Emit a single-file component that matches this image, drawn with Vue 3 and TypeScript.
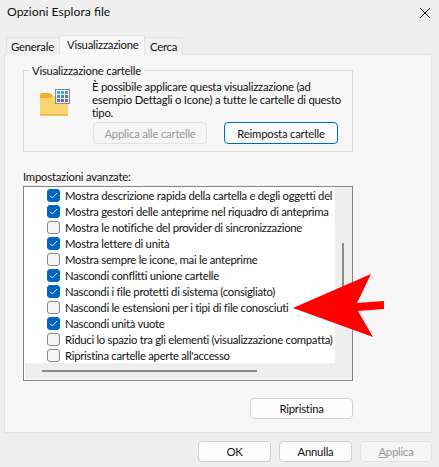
<script setup lang="ts">
const rows: { label: string; on: boolean }[] = [
  { label: 'Mostra descrizione rapida della cartella e degli oggetti del', on: true },
  { label: 'Mostra gestori delle anteprime nel riquadro di anteprima', on: true },
  { label: 'Mostra le notifiche del provider di sincronizzazione', on: false },
  { label: 'Mostra lettere di unità', on: true },
  { label: 'Mostra sempre le icone, mai le anteprime', on: false },
  { label: 'Nascondi conflitti unione cartelle', on: true },
  { label: 'Nascondi i file protetti di sistema (consigliato)', on: true },
  { label: 'Nascondi le estensioni per i tipi di file conosciuti', on: false },
  { label: 'Nascondi unità vuote', on: true },
  { label: 'Riduci lo spazio tra gli elementi (visualizzazione compatta)', on: false },
  { label: "Ripristina cartelle aperte all'accesso", on: false },
]
const cells = ['#3cb4d8', '#3cb4d8', '#4a9fd8', '#4a8ed0', '#4a80c8', '#5a78c4', '#6a70bc', '#7068b8', '#7868b4']
</script>

<template>
  <div class="dialog">
    <header class="titlebar">
      <span class="title">Opzioni Esplora file</span>
      <svg class="close" width="10" height="10" viewBox="0 0 10 10">
        <path d="M0 0L10 10M10 0L0 10" stroke="#1a1a1a" stroke-width="1" fill="none" />
      </svg>
    </header>

    <nav class="tabs">
      <div class="tab tab-first">Generale</div>
      <div class="tab active">Visualizzazione</div>
      <div class="tab">Cerca</div>
    </nav>

    <main class="panel">
      <fieldset class="group">
        <legend class="legend">Visualizzazione cartelle</legend>
        <svg class="folder" width="30" height="27" viewBox="0 0 30 27">
          <path d="M0 6a2 2 0 0 1 2-2h8l3 3v3H0z" fill="#eeb02e" />
          <path d="M0 10.5l1-1.5h10l2-2h15v19a1 1 0 0 1-1 1H1a1 1 0 0 1-1-1z" fill="#fbd56f" />
          <rect x="0" y="25" width="28" height="1.6" fill="#eeba48" />
          <rect x="15.5" y="0.5" width="14" height="14" fill="#f4f4f4" stroke="#8a8a8a" />
          <rect
            v-for="(c, i) in cells"
            :key="i"
            :x="17 + (i % 3) * 4"
            :y="2 + Math.floor(i / 3) * 4"
            width="3"
            height="3"
            :fill="c"
          />
        </svg>
        <div class="group-body">
          <p class="desc">È possibile applicare questa visualizzazione (ad<br />esempio Dettagli o Icone) a tutte le cartelle di questo<br />tipo.</p>
          <div class="group-actions">
            <button class="btn disabled wide">Applica alle cartelle</button>
            <button class="btn primary wide">Reimposta cartelle</button>
          </div>
        </div>
      </fieldset>

      <div class="adv-label">Impostazioni avanzate:</div>

      <section class="listbox">
        <div class="list-top">
          <ul class="rows">
            <li v-for="r in rows" :key="r.label" class="row">
              <span class="check" :class="{ on: r.on }">
                <svg v-if="r.on" width="9" height="7" viewBox="0 0 9 7">
                  <path d="M1 3.6L3.3 6L8 1" stroke="#dce9f7" stroke-width="1" fill="none" />
                </svg>
              </span>
              <span class="row-text">{{ r.label }}</span>
            </li>
          </ul>
          <div class="vscroll"><div class="vthumb"></div></div>
        </div>
        <div class="hscroll"><div class="hthumb"></div></div>
      </section>

      <div class="restore-row">
        <button class="btn restore">Ripristina</button>
      </div>
    </main>

    <footer class="footer">
      <button class="btn foot">OK</button>
      <button class="btn foot">Annulla</button>
      <button class="btn foot disabled"><span><u>A</u>pplica</span></button>
    </footer>

    <svg class="arrow" width="439" height="467" viewBox="0 0 439 467">
      <polygon points="293,308 371,274 357,303 384,301 384,309 358,311 373,337" fill="#ff0000" />
    </svg>
  </div>
</template>

<style>
html, body { margin: 0; background: #f0f0f0; }
</style>

<style scoped>
.dialog {
  position: relative;
  width: 439px;
  height: 467px;
  overflow: hidden;
  background: #efefef;
  color: #111;
  font-family: Lato, "Liberation Sans", sans-serif;
  font-size: 11.3px;
  letter-spacing: -0.22px;
  box-sizing: border-box;
}
.titlebar {
  height: 35px;
  display: flex;
  justify-content: space-between;
  padding: 7px 9px 0 7px;
  box-sizing: border-box;
}
.title { line-height: 10px; height: 10px; font-size: 12.2px; letter-spacing: 0; }
.close { margin-top: 1px; }
.tabs {
  display: flex;
  align-items: flex-end;
  height: 20px;
  padding-left: 6px;
  margin-bottom: -1px;
  position: relative;
  z-index: 1;
}
.tab {
  height: 18px;
  line-height: 18px;
  padding: 0 5px;
  box-sizing: border-box;
  border: 1px solid #e3e3e3;
  border-left: 0;
  border-bottom: 0;
  background: #f0f0f0;
  white-space: nowrap;
}
.tab-first { border-left: 1px solid #e3e3e3; width: 54px; padding-left: 4px; }
.tab:last-child { width: 38px; }
.tab.active {
  height: 20px;
  line-height: 17px;
  width: 85px;
  padding: 0 7px;
  background: #f7f7f7;
  border-bottom: 1px solid #f7f7f7;
}
.panel {
  width: 428px;
  height: 379px;
  margin-left: 4px;
  box-sizing: border-box;
  background: #f7f7f7;
  border: 1px solid #e3e3e3;
  padding: 8px 0 0 18px;
}
.group {
  position: relative;
  width: 330px;
  height: 89px;
  box-sizing: border-box;
  margin: 0;
  padding: 0;
  border: 1px solid #d9d9d9;
  display: flex;
}
.legend {
  padding: 0 3px;
  margin-left: 5px;
  line-height: 16px;
  height: 14px;
}
.folder { position: absolute; left: 16px; top: 12px; }
.group-body { position: absolute; left: 69px; top: 3px; width: 255px; }
.desc {
  margin: 0 0 0 -1px;
  line-height: 13px;
  white-space: nowrap;
}
.group-actions { display: flex; gap: 17px; margin-top: 3px; }
.btn {
  font: inherit;
  letter-spacing: inherit;
  color: #111;
  background: #fdfdfd;
  border: 1px solid #d0d0d0;
  border-radius: 4px;
  box-sizing: border-box;
  padding: 0;
  text-align: center;
}
.btn.wide { width: 114px; height: 22px; }
.btn.primary { border-color: #0067c0; background: #fdfdfd; }
.btn.disabled { background: #f5f5f5; color: #9a9a9a; border-color: #e2e2e2; }
.adv-label { margin-top: 17px; line-height: 16px; height: 17px; }
.listbox {
  width: 330px;
  height: 195px;
  box-sizing: border-box;
  border: 1px solid #83838f;
  background: #fff;
  padding: 0 1px 1px;
  overflow: hidden;
}
.list-top { display: flex; height: 176px; }
.rows {
  list-style: none;
  margin: 0;
  padding: 0;
  width: 310px;
  flex: none;
  overflow: hidden;
  letter-spacing: -0.27px;
}
.row {
  display: flex;
  align-items: center;
  height: 16px;
  padding-left: 22px;
  white-space: nowrap;
}
.check {
  width: 13px;
  height: 13px;
  flex: none;
  box-sizing: border-box;
  border: 1px solid #8a8a8a;
  border-radius: 3px;
  background: #f6f6f6;
  display: flex;
  align-items: center;
  justify-content: center;
}
.check.on { background: #0067c0; border-color: #0067c0; }
.row-text { margin-left: 5px; }
.vscroll { width: 17px; flex: none; background: #eeeeee; position: relative; }
.vthumb {
  position: absolute;
  left: 7px;
  top: 56px;
  width: 2px;
  height: 48px;
  background: #8a8a8a;
}
.hscroll { height: 16px; background: #eeeeee; position: relative; width: 327px; }
.hthumb {
  position: absolute;
  left: 17px;
  top: 7px;
  width: 215px;
  height: 2px;
  background: #8a8a8a;
}
.restore-row { margin-top: 17px; width: 330px; display: flex; justify-content: flex-end; }
.btn.restore { width: 103px; height: 21px; }
.footer {
  display: flex;
  gap: 8px;
  padding: 8px 0 0 198px;
}
.btn.foot { width: 73px; height: 21px; }
.btn.foot.disabled { width: 72px; }
.arrow { position: absolute; left: 0; top: 0; pointer-events: none; }
</style>
